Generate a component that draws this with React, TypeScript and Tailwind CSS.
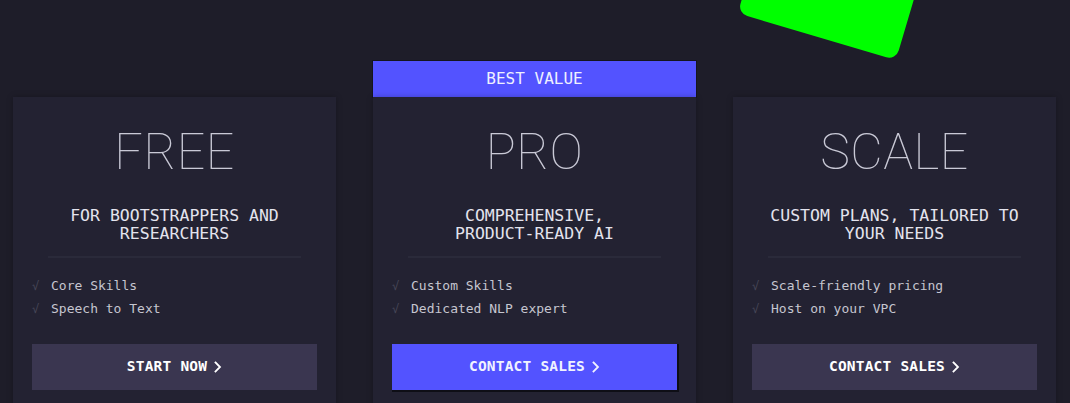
import React from "react";

type Plan = {
  name: string;
  tagline: string[];
  features: string[];
  cta: string;
  featured?: boolean;
};

const plans: Plan[] = [
  {
    name: "FREE",
    tagline: ["FOR BOOTSTRAPPERS AND", "RESEARCHERS"],
    features: ["Core Skills", "Speech to Text"],
    cta: "START NOW",
  },
  {
    name: "PRO",
    tagline: ["COMPREHENSIVE,", "PRODUCT-READY AI"],
    features: ["Custom Skills", "Dedicated NLP expert"],
    cta: "CONTACT SALES",
    featured: true,
  },
  {
    name: "SCALE",
    tagline: ["CUSTOM PLANS, TAILORED TO", "YOUR NEEDS"],
    features: ["Scale-friendly pricing", "Host on your VPC"],
    cta: "CONTACT SALES",
  },
];

const mono = "font-['DejaVu_Sans_Mono','Liberation_Mono',monospace]";

function Chevron() {
  return (
    <svg width="8" height="12" viewBox="0 0 8 12" fill="none" className="ml-[7px]">
      <path d="M1.5 1.5 L6 6 L1.5 10.5" stroke="currentColor" strokeWidth="1.8" strokeLinecap="square" />
    </svg>
  );
}

function PlanCard({ plan }: { plan: Plan }) {
  return (
    <div className="flex flex-col w-[323px]">
      {plan.featured ? (
        <div
          className={`h-[36px] bg-[#5353ff] flex items-center justify-center text-[#eef0ff] text-[16px] ${mono} shadow-[0_0_0_1px_#15151f]`}
        >
          BEST VALUE
        </div>
      ) : (
        <div className="h-[36px]" />
      )}
      <div className="bg-[#232232] h-[400px] flex flex-col items-stretch px-[19px] shadow-[0_0_6px_rgba(0,0,0,0.25)]">
        <div className="mt-[29px] text-center font-['Roboto',sans-serif] font-thin text-[50px] leading-[52px] tracking-[0.5px] text-[#c9c9d6]">
          {plan.name}
        </div>
        <div className={`mt-[29px] text-center text-[16.5px] leading-[18px] text-[#e4e4ee] ${mono}`}>
          {plan.tagline.map((l) => (
            <div key={l}>{l}</div>
          ))}
        </div>
        <div className="mt-[13px] mx-[16px] h-[2px] bg-[#383849] border-y border-[#2a2a3a]" />
        <div className={`mt-[19px] flex flex-col gap-[5px] text-[13px] leading-[18px] ${mono}`}>
          {plan.features.map((f) => (
            <div key={f} className="flex items-center">
              <span className="w-[19px] text-[#474757] text-[12px]">√</span>
              <span className="text-[#c6c6d0]">{f}</span>
            </div>
          ))}
        </div>
        <button
          className={`mt-[26px] h-[46px] flex items-center justify-center font-bold text-[14.5px] tracking-[0.2px] ${mono} ${
            plan.featured
              ? "bg-[#5353ff] text-[#f0f2ff] shadow-[1px_1px_0_1px_#0e0e16]"
              : "bg-[#3a3650] text-white"
          }`}
        >
          {plan.cta}
          <Chevron />
        </button>
      </div>
    </div>
  );
}

export default function App() {
  return (
    <div className="relative w-[1070px] h-[403px] overflow-hidden bg-[#1e1d29]">
      <div className="absolute left-[757px] top-[-120px] w-[165px] h-[160px] rotate-[16.5deg] rounded-[10px] bg-[#00ff00]" />
      <div className="relative flex gap-[37px] pl-[13px] pt-[61px]">
        {plans.map((p) => (
          <PlanCard key={p.name} plan={p} />
        ))}
      </div>
    </div>
  );
}
